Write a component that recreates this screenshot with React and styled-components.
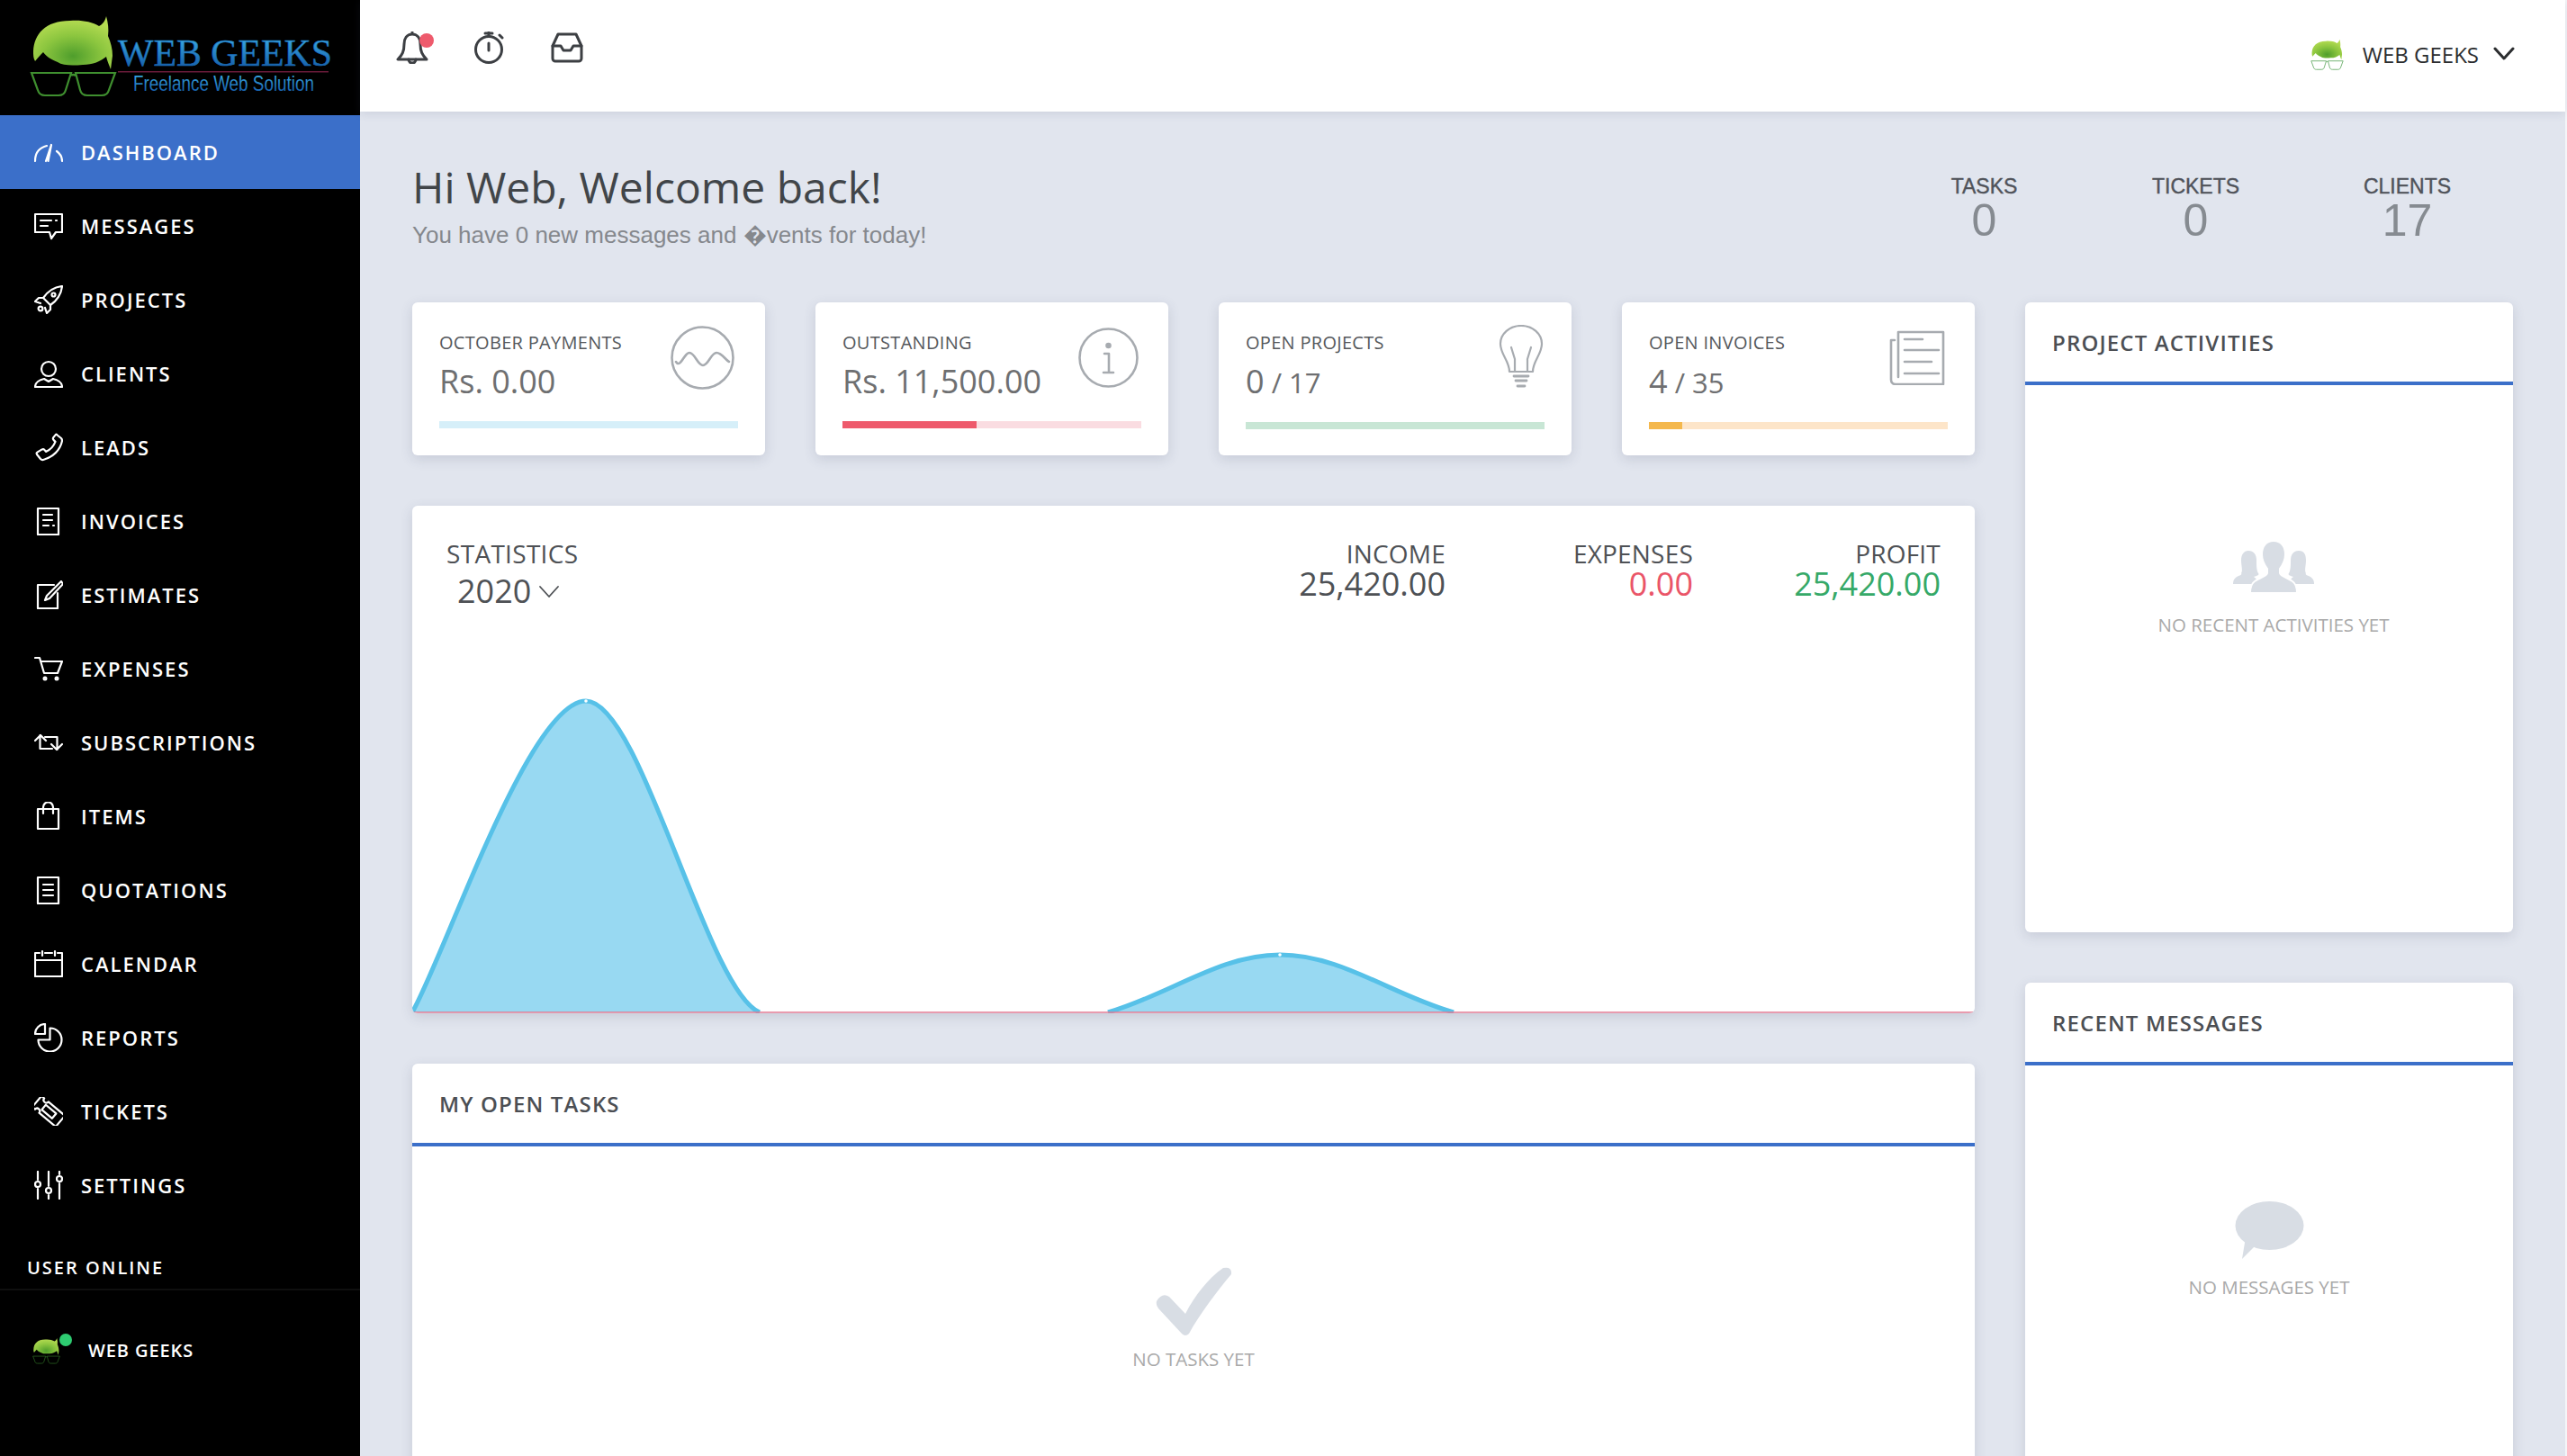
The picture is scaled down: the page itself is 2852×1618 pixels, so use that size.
import React from 'react';
import styled, { createGlobalStyle } from 'styled-components';

const GlobalStyle = createGlobalStyle`
  html, body {
    margin: 0;
    padding: 0;
    background: #e1e5ee;
  }
  body {
    font-family: "Open Sans", "Liberation Sans", sans-serif;
  }
  * {
    box-sizing: border-box;
  }
`;

// Page frame
const Page = styled.div`
  display: flex;
  width: 2852px;
  height: 1618px;
  overflow: hidden;
  background: #e1e5ee;
`;

const Sidebar = styled.aside`
  flex: 0 0 400px;
  height: 100%;
  background: #000;
  color: #fff;
`;

const LogoWrap = styled.div`
  height: 128px;
  svg {
    display: block;
  }
`;

const NavRow = styled.div`
  display: flex;
  align-items: center;
  gap: 20px;
  height: 82px;
  padding-left: 38px;
  background: ${(p) => (p.$active ? '#3b6fc9' : 'transparent')};
  font-size: 22px;
  font-weight: 600;
  letter-spacing: 2px;
  svg {
    flex: 0 0 32px;
  }
`;

const SideHeading = styled.div`
  height: 76px;
  padding: 37px 0 0 30px;
  border-bottom: 2px solid #0f0f0f;
  font-size: 20px;
  line-height: 28px;
  font-weight: 600;
  letter-spacing: 2px;
`;

const OnlineRow = styled.div`
  display: flex;
  align-items: center;
  gap: 31px;
  padding: 52px 0 0 36px;
  font-size: 20px;
  line-height: 30px;
  font-weight: 600;
  letter-spacing: 0.9px;
`;

const OnlineAvatar = styled.div`
  position: relative;
  width: 31px;
  height: 30px;
  svg {
    display: block;
  }
  &::after {
    content: '';
    position: absolute;
    top: -4px;
    left: 30px;
    width: 14px;
    height: 14px;
    border-radius: 50%;
    background: #2ecc71;
  }
`;

const Main = styled.main`
  flex: 0 0 2450px;
  height: 100%;
`;

const EdgeStrip = styled.div`
  flex: 0 0 2px;
  background: #f4f5f8;
`;

// Top bar
const TopBar = styled.header`
  position: relative;
  z-index: 2;
  display: flex;
  align-items: center;
  justify-content: space-between;
  height: 124px;
  padding: 0 56px 16px 40px;
  background: #fff;
  box-shadow: 0 2px 10px rgba(70, 80, 110, 0.14);
`;

const TopIcons = styled.div`
  display: flex;
  align-items: center;
  gap: 50px;
  color: #3c3f43;
  margin-top: -3px;
`;

const BellWrap = styled.div`
  position: relative;
  width: 36px;
  height: 36px;
  svg {
    display: block;
  }
  &::after {
    content: '';
    position: absolute;
    top: 2px;
    left: 26px;
    width: 16px;
    height: 16px;
    border-radius: 50%;
    background: #ee5a6c;
  }
`;

const UserMenu = styled.div`
  display: flex;
  align-items: center;
  color: #2b2d2f;
  font-size: 24px;
  margin-top: 12px;
`;

const UserName = styled.span`
  margin: 0 16px 0 21px;
`;

// Content
const Content = styled.div`
  padding: 0 58px;
`;

const Welcome = styled.section`
  display: flex;
  justify-content: space-between;
  height: 212px;
`;

const Title = styled.h1`
  margin: 52px 0 0;
  font-size: 48px;
  line-height: 64px;
  font-weight: 400;
  color: #414549;
`;

const Subtitle = styled.p`
  margin: 3px 0 0;
  font-family: "Liberation Sans", Arial, sans-serif;
  font-size: 26px;
  line-height: 36px;
  color: #85888d;
`;

const Counters = styled.div`
  display: flex;
  margin: 68px 0 0 0;
`;

const Counter = styled.div`
  width: 235px;
  text-align: center;
  font-family: "Liberation Sans", Arial, sans-serif;
`;

const CounterLabel = styled.div`
  font-size: 23px;
  line-height: 30px;
  color: #50535a;
  -webkit-text-stroke: 0.4px #50535a;
`;

const CounterValue = styled.div`
  font-size: 50px;
  line-height: 46px;
  color: #868b91;
`;

const Layout = styled.div`
  display: grid;
  grid-template-columns: 1736px 542px;
  gap: 56px;
`;

const Column = styled.div`
  display: flex;
  flex-direction: column;
  gap: 56px;
`;

const CardRow = styled.div`
  display: grid;
  grid-template-columns: repeat(4, 392px);
  gap: 56px;
`;

const Sheet = styled.div`
  background: #fff;
  border-radius: 6px;
  box-shadow: 0 4px 14px rgba(60, 70, 100, 0.16);
`;

const Card = styled(Sheet)`
  position: relative;
  height: 170px;
  padding: 30px 30px 0;
`;

const CardTitle = styled.div`
  font-size: 20px;
  line-height: 30px;
  font-weight: 500;
  letter-spacing: 0.3px;
  color: #55585c;
`;

const CardValue = styled.div`
  margin-top: 3px;
  font-size: 36px;
  line-height: 50px;
  color: #6e6f71;
  small {
    font-size: 31px;
  }
`;

const CardIcon = styled.div`
  position: absolute;
  top: ${(p) => p.$top}px;
  right: ${(p) => p.$right}px;
  color: #a7abb0;
  svg {
    display: block;
  }
`;

const Track = styled.div`
  height: 8px;
  margin-top: 19px;
  background: ${(p) => p.$bg};
`;

const Fill = styled.div`
  height: 100%;
  background: ${(p) => p.$color};
`;

const StatsPanel = styled(Sheet)`
  display: flex;
  flex-direction: column;
  justify-content: space-between;
  height: 564px;
  overflow: hidden;
  svg {
    display: block;
  }
`;

const StatsHead = styled.div`
  display: flex;
  justify-content: space-between;
  padding: 33px 38px 0;
  color: #4e5155;
`;

const StatsName = styled.div`
  font-size: 28px;
  line-height: 40px;
  font-weight: 500;
  letter-spacing: 0.3px;
`;

const YearPick = styled.div`
  display: flex;
  align-items: center;
  gap: 8px;
  padding: 1px 0 0 12px;
  font-size: 36px;
  line-height: 42px;
`;

const Totals = styled.div`
  display: flex;
  padding-top: 3px;
`;

const Total = styled.div`
  width: 275px;
  text-align: right;
  font-size: 28px;
  line-height: 34px;
  font-weight: 500;
  letter-spacing: 0.2px;
  div {
    font-size: 36px;
    line-height: 34px;
    font-weight: 400;
    letter-spacing: 0;
    color: ${(p) => p.$color};
  }
`;

const Panel = styled(Sheet)`
  height: ${(p) => p.$height}px;
`;

const PanelHead = styled.div`
  height: 92px;
  padding: 30px 30px 0;
  border-bottom: 4px solid #3b6fc9;
  color: #4c4f54;
  font-size: 24px;
  line-height: 30px;
  font-weight: 600;
  letter-spacing: 1.15px;
`;

const Empty = styled.div`
  display: flex;
  flex-direction: column;
  align-items: center;
  padding-top: ${(p) => p.$top}px;
  margin-left: ${(p) => p.$shift || 0}px;
  color: #a9a9a9;
  font-size: 20.5px;
  line-height: 28px;
  svg {
    display: block;
    margin-bottom: ${(p) => p.$gap}px;
  }
`;

// Drawings
const GeekDefs = () => (
  <defs>
    <radialGradient id="hair" cx="50%" cy="75%" r="70%">
      <stop offset="0" stopColor="#4f9e2c" />
      <stop offset="0.55" stopColor="#8cc63f" />
      <stop offset="1" stopColor="#b5dc52" />
    </radialGradient>
    <linearGradient id="brand" x1="0" y1="0" x2="0" y2="1">
      <stop offset="0" stopColor="#3fb6ec" />
      <stop offset="1" stopColor="#0f4f9e" />
    </linearGradient>
  </defs>
);

const GeekShape = ({ lens }) => (
  <>
    <path
      fill="url(#hair)"
      d="M37 57C38 38 50 23 78 23 90 22 102 24 110 29 114 27 117 23 118 18 120 25 121 32 120 40 123 47 125 54 125 62L123 77C121 72 119 67 118 63 112 68 103 72 92 72 80 73 70 73 64 69 56 66 51 62 48 58 45 61 42 64 39 68 37 65 37 61 37 57Z"
    />
    <path
      fill="none"
      stroke={lens}
      strokeWidth="2.2"
      d="M35 81H79L73 100C72 104 69 106 65 106H50C46 106 43 104 42 100ZM79 84Q81 82 84 84M84 81H128L121 100C120 104 117 106 113 106H97C93 106 90 104 89 100Z"
    />
  </>
);

const Logo = () => (
  <svg width="400" height="128" viewBox="0 0 400 128">
    <GeekDefs />
    <GeekShape lens="#3f8f2f" />
    <text x="131" y="73" fontFamily="Liberation Serif, serif" fontSize="42" stroke="#1a6cb8" strokeWidth="0.6" fill="url(#brand)" textLength="238" lengthAdjust="spacingAndGlyphs">WEB GEEKS</text>
    <rect x="131" y="79" width="234" height="1.5" fill="#6a1b3a" />
    <text x="148" y="101" fontFamily="Liberation Sans, sans-serif" fontSize="24" fill="url(#brand)" textLength="201" lengthAdjust="spacingAndGlyphs">Freelance Web Solution</text>
  </svg>
);

const Geek = ({ width, height, lens }) => (
  <svg width={width} height={height} viewBox="33 16 97 92">
    <GeekDefs />
    <GeekShape lens={lens} />
  </svg>
);

const Line = ({ size = 32, width = 2.2, box = 32, children }) => (
  <svg width={size} height={size} viewBox={`0 0 ${box} ${box}`} fill="none" stroke="currentColor" strokeWidth={width} strokeLinecap="round" strokeLinejoin="round">
    {children}
  </svg>
);

const NAV = [
  { label: 'DASHBOARD', icon: <><path d="M1 26C1 17 6 11 14 9" /><path d="M13 26L19 8 15.5 26" /><path d="M25 15c4 3 6 7 6 11" /></> },
  { label: 'MESSAGES', icon: <><path d="M1 3h30v20h-7l-5 7-2-7H1z" /><path d="M7 10h12M24 10h1M7 16h8" /></> },
  { label: 'PROJECTS', icon: <><path d="M31 1C22 2 15 7 10 14l8 8c7-5 12-12 13-21z" /><circle cx="21.5" cy="10.5" r="2" /><path d="M10 14H5l-4 4 6 2M18 22v5l-4 4-2-6" /><circle cx="7" cy="26" r="2.4" /></> },
  { label: 'CLIENTS', icon: <><circle cx="16" cy="11" r="8" /><path d="M1 31c0-5 5-8 10-9l5 3 5-3c5 1 10 4 10 9z" /></> },
  { label: 'LEADS', icon: <path d="M25 2l5 4c1 1 1 2 1 3-2 10-10 18-21 21-1 .3-2 0-3-1l-4-5c-.6-1-.3-2 .7-2.600l5-3c1-.5 2-.3 2.700.5l1.600 2c5-2 8.500-6 10.500-11l-2-2c-.7-.8-.8-2 0-3l2.500-3c.4-.4.700-.4 1-.100z" /> },
  { label: 'INVOICES', icon: <><rect x="4" y="2" width="23" height="29" /><path d="M10 9h10M10 15h10M10 21h6M21 21h1" /></> },
  { label: 'ESTIMATES', icon: <><path d="M22 5H4v26h22V14" /><path d="M30 1L14 17l-2 5 5-2L32 4z" /></> },
  { label: 'EXPENSES', icon: <><path d="M1 4h5l5 17h15l5-13H8" /><circle cx="12" cy="27" r="1.400" /><circle cx="25" cy="27" r="1.400" /></> },
  { label: 'SUBSCRIPTIONS', icon: <><path d="M1 14l6-6 6 6M6.500 8v15H20" /><path d="M31 18l-6 6-6-6M25.500 24V10H12" /></> },
  { label: 'ITEMS', icon: <><rect x="4" y="8" width="23" height="22" /><path d="M10 13V6a5.500 5.500 0 0 1 11 0v7" /></> },
  { label: 'QUOTATIONS', icon: <><rect x="4" y="2" width="23" height="29" /><path d="M10 10h11M10 16h11M10 22h11" /></> },
  { label: 'CALENDAR', icon: <><path d="M6 4H1v26h30V4h-5M12 4h8" /><path d="M1 12h30M9 2v5M23 2v5" /></> },
  { label: 'REPORTS', icon: <><path d="M17.500 5.500A13 13 0 1 1 4.500 18.500h13z" /><path d="M12 1A11 11 0 0 0 1 12h11z" /></> },
  { label: 'TICKETS', icon: <g transform="rotate(40 16 16)"><path d="M-1 8h4a3 3 0 0 0 6 0h24v16H9a3 3 0 0 0-6 0h-4z" /><rect x="9" y="12.500" width="15" height="7" /></g> },
  { label: 'SETTINGS', icon: <><path d="M4 1v9M4 20v11M16 1v16M16 27v4M28 1v3M28 14v17" /><circle cx="4" cy="15" r="3" /><circle cx="16" cy="22" r="3" /><circle cx="28" cy="9" r="3" /></> },
];

const CARDS = [
  {
    title: 'OCTOBER PAYMENTS', value: 'Rs. 0.00', bg: '#d6eff9', color: '#5bc0e8', pct: 0, top: 26, right: 34,
    icon: (
      <Line size={71} box={71} width={2.6}>
        <ellipse cx="35.500" cy="35.500" rx="34" ry="34" />
        <path d="M6 40c5 8 9-10 15-10s9 14 15 14 9-14 15-14 10 8 14 10" />
      </Line>
    ),
  },
  {
    title: 'OUTSTANDING', value: 'Rs. 11,500.00', bg: '#fadce1', color: '#ee5a6c', pct: 45, top: 28, right: 33,
    icon: (
      <Line size={67} box={67} width={2.6}>
        <circle cx="33.500" cy="33.500" r="32" />
        <circle cx="33.500" cy="20" r="2" fill="currentColor" />
        <path d="M29 29h5v21M28 50h11" />
      </Line>
    ),
  },
  {
    title: 'OPEN PROJECTS', value: '0', rest: ' / 17', bg: '#c8e6d5', color: '#36b37e', pct: 0, top: 25, right: 20,
    icon: (
      <Line size={72} box={72} width={2.2}>
        <path d="M23 52C23 40 13 33 13 21 13 10 23 1 36 1s23 9 23 20c0 12-10 19-10 31z" />
        <path d="M29 52V38l-4-13M43 52V38l4-13" />
        <path d="M28 57h16M30 62h12M32 68h8" strokeWidth="2.800" />
      </Line>
    ),
  },
  {
    title: 'OPEN INVOICES', value: '4', rest: ' / 35', bg: '#fde5c9', color: '#f4b84d', pct: 11, top: 30, right: 33,
    icon: (
      <Line size={62} box={62} width={2.6}>
        <path d="M10 3h50v58H7c-3 0-5-2-5-5V12h4M10 3v50" />
        <path d="M17 11h20M17 23h38M17 36h30M17 49h38" />
      </Line>
    ),
  },
];

const TOTALS = [
  { label: 'INCOME', value: '25,420.00', color: '#4e5155' },
  { label: 'EXPENSES', value: '0.00', color: '#ea5568' },
  { label: 'PROFIT', value: '25,420.00', color: '#36a968' },
];

const PEAK_A = 'M458 1125C495 1060 588 779 651 779C712 779 785 1100 844 1125';
const PEAK_B = 'M1231 1125C1300 1105 1355 1061 1422 1061C1490 1061 1545 1105 1615 1125';

const Chart = () => (
  <svg width="1736" height="380" viewBox="458 746 1736 380">
    <path d={`${PEAK_A}Z`} fill="#98d9f2" />
    <path d={`${PEAK_B}Z`} fill="#98d9f2" />
    <path d={PEAK_A} fill="none" stroke="#57c1e8" strokeWidth="5" />
    <path d={PEAK_B} fill="none" stroke="#57c1e8" strokeWidth="5" />
    <path d="M458 1125H2194" stroke="#e07a93" strokeWidth="1.500" />
    <circle cx="651" cy="779" r="1.800" fill="#fff" />
    <circle cx="1422" cy="1061" r="1.800" fill="#fff" />
  </svg>
);

const App = () => (
  <>
    <GlobalStyle />
    <Page>
      <Sidebar>
        <LogoWrap><Logo /></LogoWrap>
        {NAV.map((item, i) => (
          <NavRow key={item.label} $active={i === 0}>
            <Line>{item.icon}</Line>
            {item.label}
          </NavRow>
        ))}
        <SideHeading>USER ONLINE</SideHeading>
        <OnlineRow>
          <OnlineAvatar><Geek width={31} height={30} lens="#2f6f25" /></OnlineAvatar>
          WEB GEEKS
        </OnlineRow>
      </Sidebar>
      <Main>
        <TopBar>
          <TopIcons>
            <BellWrap>
              <Line size={36} box={36} width={3}>
                <path d="M18 3c-6 0-9 5-9 11 0 8-2 12-7 17h32c-5-5-7-9-7-17 0-6-3-11-9-11zM18 1v2" />
                <path d="M14 31a4 4 0 0 0 8 0" />
              </Line>
            </BellWrap>
            <Line size={36} box={36} width={3}>
              <circle cx="17" cy="20" r="14.500" />
              <path d="M17 1v4M13 2h8M17 13v8M29 4l3 3" />
            </Line>
            <Line size={36} box={36} width={3}>
              <path d="M8 3h20l6 13v14a3 3 0 0 1-3 3H5a3 3 0 0 1-3-3V16z" />
              <path d="M2 16h9l3 5h8l3-5h9" />
            </Line>
          </TopIcons>
          <UserMenu>
            <Geek width={37} height={35} lens="#5fa85f" />
            <UserName>WEB GEEKS</UserName>
            <Line size={24} box={24} width={3}><path d="M2 6l10 11L22 6" /></Line>
          </UserMenu>
        </TopBar>
        <Content>
          <Welcome>
            <div>
              <Title>Hi Web, Welcome back!</Title>
              <Subtitle>You have 0 new messages and {'\uFFFD'}vents for today!</Subtitle>
            </div>
            <Counters>
              <Counter><CounterLabel>TASKS</CounterLabel><CounterValue>0</CounterValue></Counter>
              <Counter><CounterLabel>TICKETS</CounterLabel><CounterValue>0</CounterValue></Counter>
              <Counter><CounterLabel>CLIENTS</CounterLabel><CounterValue>17</CounterValue></Counter>
            </Counters>
          </Welcome>
          <Layout>
            <Column>
              <CardRow>
                {CARDS.map((c) => (
                  <Card key={c.title}>
                    <CardTitle>{c.title}</CardTitle>
                    <CardValue>{c.value}{c.rest && <small>{c.rest}</small>}</CardValue>
                    <CardIcon $top={c.top} $right={c.right}>{c.icon}</CardIcon>
                    <Track $bg={c.bg}>
                      <Fill $color={c.color} style={{ width: `${c.pct}%` }} />
                    </Track>
                  </Card>
                ))}
              </CardRow>
              <StatsPanel>
                <StatsHead>
                  <div>
                    <StatsName>STATISTICS</StatsName>
                    <YearPick>
                      2020
                      <Line size={24} box={24} width={1.800}><path d="M2 7l10 11L22 7" /></Line>
                    </YearPick>
                  </div>
                  <Totals>
                    {TOTALS.map((t) => (
                      <Total key={t.label} $color={t.color}>
                        {t.label}
                        <div>{t.value}</div>
                      </Total>
                    ))}
                  </Totals>
                </StatsHead>
                <Chart />
              </StatsPanel>
              <Panel $height={600}>
                <PanelHead>MY OPEN TASKS</PanelHead>
                <Empty $top={134} $gap={12}>
                  <svg width="86" height="76" viewBox="0 0 86 76" fill="#d8dde4">
                    <path d="M2 38Q8 28 16 33L34 52C44 32 60 12 76 1Q86-1 85 8C70 26 50 52 38 74Q34 78 30 74L4 46Q1 42 2 38Z" />
                  </svg>
                  NO TASKS YET
                </Empty>
              </Panel>
            </Column>
            <Column>
              <Panel $height={700}>
                <PanelHead>PROJECT ACTIVITIES</PanelHead>
                <Empty $top={173} $shift={10} $gap={21}>
                  <svg width="90" height="58" viewBox="0 0 90 58" fill="#d8dde4">
                    <path d="M17 11c6 0 9 4 9 11 0 5 0 11 2 14 2 2-3 3-5 4 3 2 4 4 4 8H0c0-5 2-7 6-9 3-1 4-2 3-3 2-3 0-9 0-14 0-7 3-11 8-11zM73 11c6 0 8 4 8 11 0 5-2 11 0 14-1 1 0 2 3 3 4 2 6 4 6 9H63c0-4 1-6 4-8-2-1-7-2-5-4 2-3 2-9 2-14 0-7 3-11 9-11z" />
                    <path stroke="#fff" strokeWidth="2" d="M45 0c8 0 13 6 13 15 0 7-3 12-6 16v5c0 3 10 6 14 9 3 2 5 6 5 13H19c0-7 2-11 5-13 4-3 14-6 14-9v-5c-3-4-6-9-6-16 0-9 5-15 13-15z" />
                  </svg>
                  NO RECENT ACTIVITIES YET
                </Empty>
              </Panel>
              <Panel $height={600}>
                <PanelHead>RECENT MESSAGES</PanelHead>
                <Empty $top={151} $gap={17}>
                  <svg width="77" height="64" viewBox="0 0 77 64" fill="#d8dde4">
                    <ellipse cx="38.500" cy="27" rx="38" ry="27" />
                    <path d="M12 40L8 64 22 50z" />
                  </svg>
                  NO MESSAGES YET
                </Empty>
              </Panel>
            </Column>
          </Layout>
        </Content>
      </Main>
      <EdgeStrip />
    </Page>
  </>
);

export default App;
